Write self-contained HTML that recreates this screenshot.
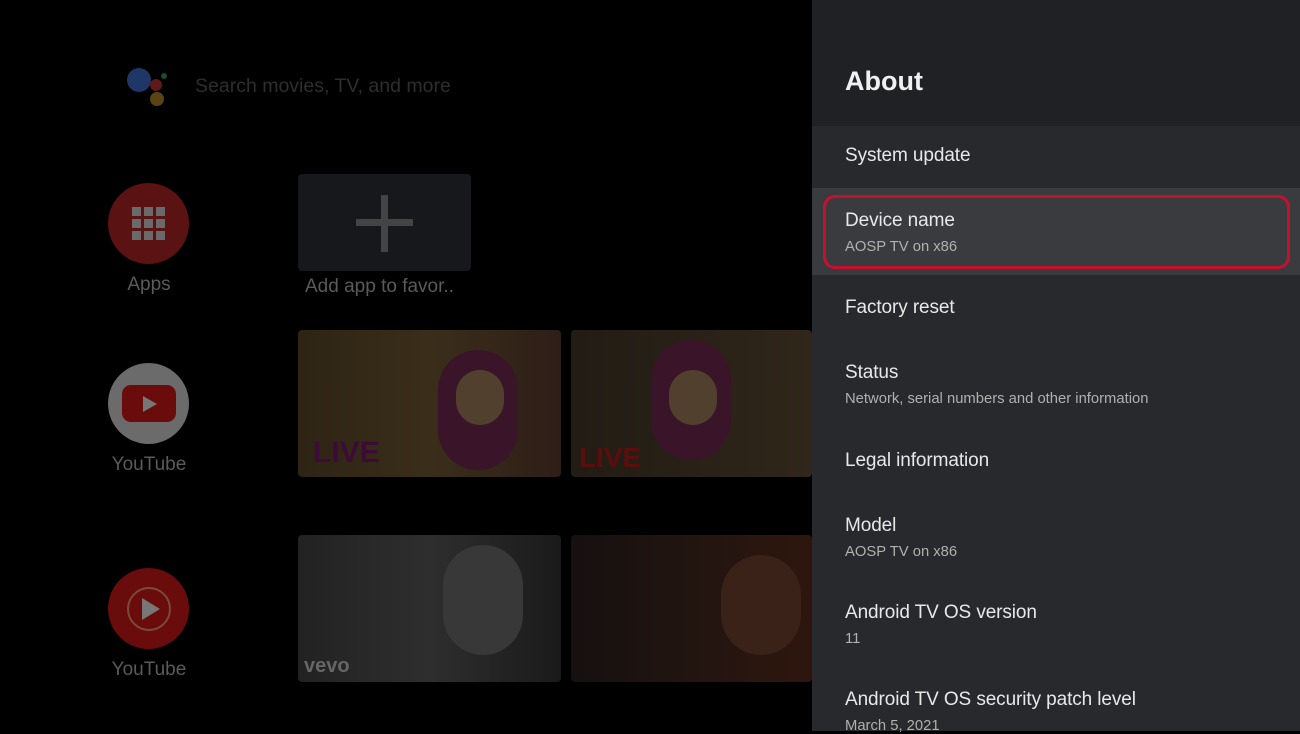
<!DOCTYPE html><html><head><style>
body{margin:0;width:1300px;height:731px;background:#000;overflow:hidden;position:relative;font-family:"Liberation Sans",sans-serif}
.a{position:absolute}
.lbl{color:#5a5a5a;font-size:19px;text-align:center;width:120px}
.th{position:absolute;border-radius:4px;overflow:hidden}
#p{position:absolute;left:812px;top:0;width:488px;height:731px;background:#28292c}
.it{position:absolute;left:33px;color:#e8e8e8;font-size:19px;letter-spacing:-0.1px;white-space:nowrap}
.sb{position:absolute;left:33px;color:#b0b0b0;font-size:14.8px;white-space:nowrap}
</style></head><body>
<div class="a" style="left:127px;top:68px;width:24px;height:24px;border-radius:50%;background:#1e3766"></div>
<div class="a" style="left:150px;top:79px;width:12px;height:12px;border-radius:50%;background:#5c1a1a"></div>
<div class="a" style="left:161px;top:73px;width:6px;height:6px;border-radius:50%;background:#1c4a2a"></div>
<div class="a" style="left:150px;top:92px;width:14px;height:14px;border-radius:50%;background:#5a4414"></div>
<div class="a" style="left:195px;top:75px;color:#2e2e2e;font-size:19.5px">Search movies, TV, and more</div>

<div class="a" style="left:108px;top:183px;width:81px;height:81px;border-radius:50%;background:#5a1212"></div>
<svg class="a" style="left:131px;top:206px" width="36" height="36"><g fill="#6a6a6a"><rect x="1" y="1" width="9" height="9"/><rect x="13" y="1" width="9" height="9"/><rect x="25" y="1" width="9" height="9"/><rect x="1" y="13" width="9" height="9"/><rect x="13" y="13" width="9" height="9"/><rect x="25" y="13" width="9" height="9"/><rect x="1" y="25" width="9" height="9"/><rect x="13" y="25" width="9" height="9"/><rect x="25" y="25" width="9" height="9"/></g></svg>
<div class="a lbl" style="left:89px;top:274px">Apps</div>
<div class="a" style="left:298px;top:174px;width:173px;height:97px;border-radius:4px;background:#16181b"></div>
<div class="a" style="left:381px;top:195px;width:7px;height:57px;background:#444"></div>
<div class="a" style="left:356px;top:219px;width:57px;height:7px;background:#444"></div>
<div class="a lbl" style="left:300px;top:276px;width:170px;text-align:left;padding-left:5px">Add app to favor..</div>

<div class="a" style="left:108px;top:363px;width:81px;height:81px;border-radius:50%;background:#6b6b6b"></div>
<div class="a" style="left:122px;top:385px;width:54px;height:37px;border-radius:9px;background:#6a0c0c"></div>
<svg class="a" style="left:141px;top:395px" width="18" height="18"><path d="M2 1L16 9L2 17Z" fill="#777"/></svg>
<div class="a lbl" style="left:89px;top:454px">YouTube</div>

<div class="a" style="left:108px;top:568px;width:81px;height:81px;border-radius:50%;background:#6a0c0c"></div>
<svg class="a" style="left:126px;top:586px" width="46" height="46"><circle cx="23" cy="23" r="21" fill="none" stroke="#7a4a3a" stroke-width="2"/><path d="M16 12L34 23L16 34Z" fill="#777"/></svg>
<div class="a lbl" style="left:89px;top:659px">YouTube</div>

<div class="th" style="left:298px;top:330px;width:263px;height:147px;background:linear-gradient(90deg,#2e2414,#3a2e1a 50%,#2e1e18)">
<div class="a" style="left:140px;top:20px;width:80px;height:120px;border-radius:40px;background:#3a1428"></div>
<div class="a" style="left:158px;top:40px;width:48px;height:55px;border-radius:24px;background:#52402f"></div>
<div class="a" style="left:15px;top:106px;color:#3e0a3a;font-weight:bold;font-size:30px">LIVE</div></div>
<div class="th" style="left:571px;top:330px;width:241px;height:147px;background:linear-gradient(90deg,#221c14,#30261a)">
<div class="a" style="left:80px;top:10px;width:80px;height:120px;border-radius:40px;background:#3a1428"></div>
<div class="a" style="left:98px;top:40px;width:48px;height:55px;border-radius:24px;background:#52402f"></div>
<div class="a" style="left:8px;top:112px;color:#5a0e0e;font-weight:bold;font-size:28px">LIVE</div></div>
<div class="th" style="left:298px;top:535px;width:263px;height:147px;background:linear-gradient(90deg,#222,#2e2e2e 50%,#1a1a1a)">
<div class="a" style="left:145px;top:10px;width:80px;height:110px;border-radius:40px;background:#383838"></div>
<div class="a" style="left:6px;top:120px;color:#666;font-size:20px;font-weight:bold">vevo</div></div>
<div class="th" style="left:571px;top:535px;width:241px;height:147px;background:linear-gradient(90deg,#161010,#221510 50%,#2e160e)">
<div class="a" style="left:150px;top:20px;width:80px;height:100px;border-radius:40px;background:#3a2218"></div></div>

<div id="p">
<div class="a" style="left:0;top:0;width:488px;height:126px;background:#202124"></div>
<div class="a" style="left:33px;top:66px;color:#f0f0f0;font-size:27px;font-weight:bold">About</div>
<div class="a" style="left:0;top:188px;width:488px;height:87px;background:#3a3b3e"></div>
<div class="a" style="left:11px;top:195px;width:461px;height:68px;border:3px solid #c8102e;border-radius:12px"></div>
<div class="it" style="top:145px">System update</div>
<div class="it" style="top:210px">Device name</div>
<div class="sb" style="top:239px">AOSP TV on x86</div>
<div class="it" style="top:297px">Factory reset</div>
<div class="it" style="top:362px">Status</div>
<div class="sb" style="top:391px">Network, serial numbers and other information</div>
<div class="it" style="top:450px">Legal information</div>
<div class="it" style="top:515px">Model</div>
<div class="sb" style="top:544px">AOSP TV on x86</div>
<div class="it" style="top:602px">Android TV OS version</div>
<div class="sb" style="top:631px">11</div>
<div class="it" style="top:689px">Android TV OS security patch level</div>
<div class="sb" style="top:718px">March 5, 2021</div>
</div>
</body></html>
